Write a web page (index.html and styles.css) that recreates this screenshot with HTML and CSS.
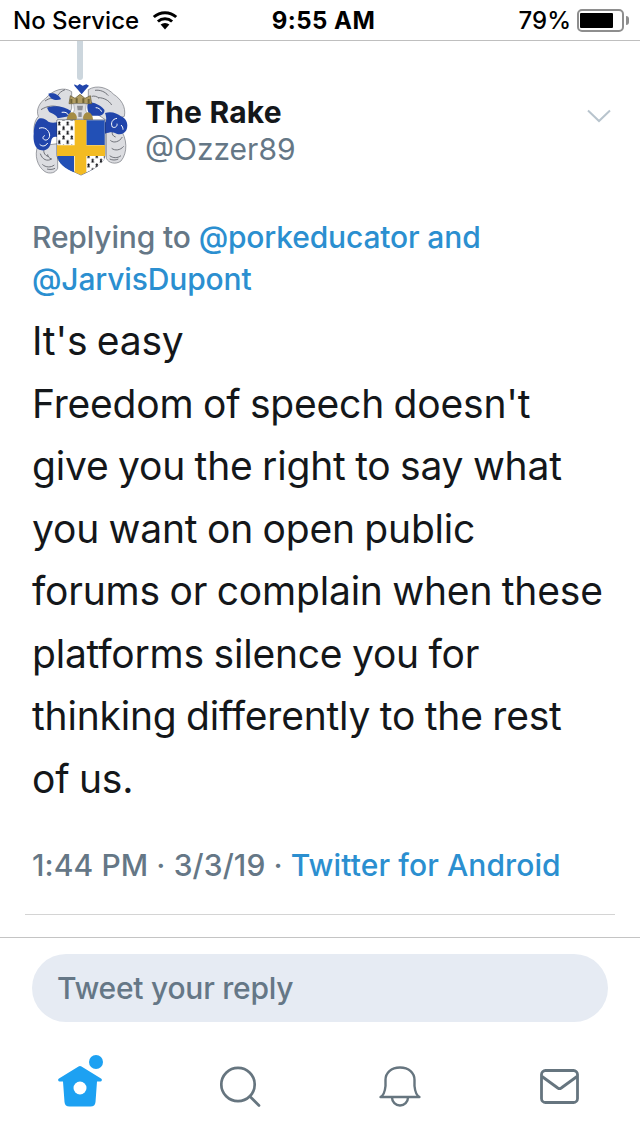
FILE: index.html
```html
<!DOCTYPE html>
<html lang="en">
<head>
<meta charset="utf-8">
<title>Tweet</title>
<link rel="stylesheet" href="styles.css">
</head>
<body>
<div class="screen">
  <header class="status">
    <div class="status-left">
      <span>No Service</span>
      <svg class="wifi" viewBox="0 0 28 20"><path d="M14 19.500 9.600 14.600a6.600 6.600 0 0 1 8.800 0Z" fill="#000"/><path d="M6.900 11.500a10.600 10.600 0 0 1 14.200 0M2.800 7a16.600 16.600 0 0 1 22.400 0" fill="none" stroke="#000" stroke-width="3"/></svg>
    </div>
    <div class="status-time">9:55 AM</div>
    <div class="status-right">
      <span>79%</span>
      <div class="battery"><div class="battery-level"></div></div>
      <div class="battery-cap"></div>
    </div>
  </header>
  <main class="tweet">
    <div class="thread-line"></div>
    <div class="author">
      <svg class="avatar" viewBox="21 24 288 294">
        <defs>
          <pattern id="ermine" x="97" y="138" width="25" height="28" patternUnits="userSpaceOnUse">
            <rect width="25" height="28" fill="#fff"/>
            <path d="M6 1 10 4 8 7 10.500 12.500H1.500L4 7 2 4ZM18.500 15 22.500 18 20.500 21 23 26.500H14L16.500 21 14.500 18Z" fill="#101116"/>
          </pattern>
        </defs>
        <g fill="#dcdde1" stroke="#6f727a" stroke-width="2">
          <path d="M140 50C118 34 84 44 62 70 44 82 32 104 40 124 26 140 22 170 34 190L110 170 140 100Z"/>
          <path d="M190 44C216 28 248 38 266 58 288 72 304 96 298 124L250 140 190 100Z"/>
          <path d="M38 214C28 240 36 274 60 290 74 298 92 294 98 280V206Z"/>
          <path d="M284 160C308 190 308 234 288 258 272 270 250 264 244 250V160Z"/>
        </g>
        <g fill="none" stroke="#55585f" stroke-width="2.400">
          <path d="M46 236c6 18 20 24 34 16-8-2-12-8-12-14M60 218c-8 10-2 24 10 26M52 268c10 10 26 10 36 2M66 282c8 2 16 2 24-2"/>
          <path d="M292 186c-8 14-26 20-36 10M296 214c-10 12-26 14-36 6M288 242c-10 8-24 8-34 0M262 168c-2 10 2 16 10 18M254 252c8 4 18 4 26 0"/>
          <path d="M60 78c14-10 30-12 46-6M48 104c18-12 40-14 58-6M120 44c-10 4-18 10-22 18M210 46c16-2 30 4 40 16M220 68c16 0 32 8 40 22M200 64c8-2 16 0 22 6"/>
        </g>
        <g fill="#2145ab">
          <path d="M70 56c14-4 30 0 38 16-12 6-32 4-38-16Z"/>
          <path d="M66 98c20-8 52-6 72 10l-6 16-34 6c-4-10-16-14-24-18-4-4-6-10-8-14Z"/>
          <path d="M44 130c10-2 18 2 26 10 8 4 16 4 26 2v44c-12-2-16 4-18 14-2 16-12 28-28 26-22-2-26-30-24-50 0-18 6-40 18-46Z"/>
          <path d="M190 82c18 0 36 8 48 22 2 10-6 16-14 18h-30c-6-12-10-28-4-40Z"/>
          <path d="M240 114c18-6 36 0 48 10 20 8 22 28 16 42-8 14-24 14-34 8-8-4-18-2-30 2l-2-32c6-4 8-14 2-30Z"/>
          <path d="M148 28l9 4 7-5 9 5 11-4 8 4-12 14-10 12-10-12-12-14Z"/>
        </g>
        <g fill="none" stroke="#fff" stroke-width="3">
          <path d="M42 160c16-6 30 4 32 20 0 12-10 18-16 14-8-4-3-12 2-12M44 208c8 8 18 6 24-4"/>
          <path d="M276 130c-14 2-20 14-14 26 8 4 16-2 14-10M110 112c10-2 18 2 20 8M212 98c8 0 14 4 18 12M288 150c4 4 6 8 6 14"/>
        </g>
        <path d="M132 86 136 62 150 70 165 58 180 70 196 62 200 86Z" fill="#b09c62" stroke="#5f5530" stroke-width="2"/>
        <path d="M136 72h6v12h-6ZM152 70h6v14h-6ZM172 70h6v14h-6ZM188 72h6v12h-6Z" fill="#6f6336"/>
        <path d="M146 86h38l-2 18 8 28h-50l8-28Z" fill="#dcdde0" stroke="#7b7d84" stroke-width="1.500"/>
        <path d="M156 92h18l-2 14h-14ZM160 112h10v14h-10Z" fill="#8c8e94"/>
        <path d="M126 134c0-16 12-28 22-20 6 4 10 14 6 20ZM204 134c0-16-12-28-22-20-6 4-10 14-6 20Z" fill="#a58c44"/>
        <path d="M96 135H240V238C240 268 198 286 168 300 138 286 96 268 96 238Z" fill="#fff" stroke="#1f2a4a" stroke-width="2"/>
        <path d="M97 136H147V210H97Z" fill="url(#ermine)"/>
        <path d="M184 136H239V210H184Z" fill="#2250b6"/>
        <path d="M97 243H147V292C124 282 97 268 97 238Z" fill="#2250b6"/>
        <path d="M184 243H239C239 266 210 280 184 292Z" fill="url(#ermine)"/>
        <path d="M149 135H184V211H240V243H184V292L168 300 149 292V243H96V211H149Z" fill="#f3bb22"/>
      </svg>
      <div class="author-names">
        <div class="author-name">The Rake</div>
        <div class="author-handle">@Ozzer89</div>
      </div>
      <svg class="chevron" viewBox="0 0 24 14"><path d="M1 1.500l11 10.500L23 1.500" fill="none" stroke="#b8c4cd" stroke-width="2"/></svg>
    </div>
    <p class="replying">Replying to <a>@porkeducator and</a><br><a>@JarvisDupont</a></p>
    <p class="body">It's easy<br>Freedom of speech doesn't<br>give you the right to say what<br>you want on open public<br>forums or complain when these<br>platforms silence you for<br>thinking differently to the rest<br>of us.</p>
    <p class="meta">1:44 PM · 3/3/19 · <a>Twitter for Android</a></p>
    <div class="rule"></div>
  </main>
  <section class="reply-bar">
    <div class="reply-input">Tweet your reply</div>
  </section>
  <nav class="tabs">
    <div class="tab">
      <svg viewBox="0 0 60 60"><path d="M28.500 7.500a3 3 0 0 1 3 0L51 19.500a1.600 1.600 0 0 1-1 3H47l-1.500 20.500a5 5 0 0 1-5 4.500h-21a5 5 0 0 1-5-4.500L13 22.500h-3a1.600 1.600 0 0 1-1-3Z" fill="#1da1f2"/><circle cx="30" cy="29" r="6.500" fill="#fff"/><circle cx="46" cy="3" r="7" fill="#1da1f2"/></svg>
    </div>
    <div class="tab">
      <svg viewBox="0 0 60 60"><circle cx="28" cy="25.500" r="16.700" fill="none" stroke="#66757f" stroke-width="2.700"/><path d="M40 37.500l9 9" stroke="#66757f" stroke-width="2.700" stroke-linecap="round"/></svg>
    </div>
    <div class="tab">
      <svg viewBox="0 0 60 60"><path d="M10.500 38c3-1.500 4.500-6 5-11v-6C15.500 14 21 8.500 30 8.500S44.500 14 44.500 21v6c.5 5 2 9.500 5 11Z" fill="none" stroke="#66757f" stroke-width="2.400" stroke-linejoin="round"/><path d="M22 38.500a8 8 0 0 0 16 0" fill="none" stroke="#66757f" stroke-width="2.400"/></svg>
    </div>
    <div class="tab">
      <svg viewBox="0 0 60 60"><rect x="11.500" y="11.500" width="36" height="32" rx="4" fill="none" stroke="#66757f" stroke-width="2.800"/><path d="M12 17.500 27.800 29a3 3 0 0 0 3.400 0L47 17.500" fill="none" stroke="#66757f" stroke-width="2.800"/></svg>
    </div>
  </nav>
</div>
</body>
</html>
```
FILE: styles.css
```css
* { box-sizing: border-box; }
html, body { margin: 0; padding: 0; background: #fff; }
body { font-family: Inter, "Liberation Sans", sans-serif; color: #14171a; }
p { margin: 0; }
.screen { width: 640px; height: 1136px; display: flex; flex-direction: column; overflow: hidden; }

.status { height: 41px; flex: none; display: grid; grid-template-columns: 1fr auto 1fr; align-items: center; padding: 0 11px 0 13px; border-bottom: 1px solid #bfbfbf; font-size: 24px; color: #000; }
.status-left { display: flex; align-items: center; gap: 12px; font-weight: 500; }
.wifi { width: 28px; height: 20px; }
.status-time { font-weight: 700; letter-spacing: .5px; margin-left: 5px; }
.status-right { display: flex; align-items: center; justify-content: flex-end; font-weight: 500; }
.battery { width: 47px; height: 23px; margin-left: 6px; border: 2px solid #8e8e8e; border-radius: 5px; padding: 2px 1px; }
.battery-level { width: 33px; height: 15px; background: #000; border-radius: 1px; }
.battery-cap { width: 3px; height: 9px; margin-left: 2px; background: #8e8e8e; border-radius: 0 3px 3px 0; }

.tweet { flex: 1; padding: 0 25px; }
.thread-line { width: 6px; height: 39px; margin-left: 52px; background: #ccd6dd; border-radius: 0 0 3px 3px; }
.author { display: flex; align-items: flex-start; margin: 3px 0 0 7px; }
.avatar { width: 96px; height: 98px; flex: none; }
.author-names { margin-left: 17px; padding-top: 11px; flex: 1; }
.author-name { font-size: 30px; line-height: 37px; font-weight: 700; letter-spacing: .2px; }
.author-handle { font-size: 30px; line-height: 36px; color: #657786; }
.chevron { width: 24px; height: 14px; margin: 26px 4px 0 0; }

.replying { margin: 35px 0 0 7px; font-size: 30px; line-height: 42px; font-weight: 500; letter-spacing: -.15px; color: #657786; }
.replying a, .meta a { color: #2b8fd0; }
.body { margin: 10px 0 0 7px; font-size: 39px; line-height: 62.5px; letter-spacing: -.2px; word-spacing: -1.2px; color: #14171a; white-space: nowrap; }
.meta { margin: 34px 0 0 7px; font-size: 30px; line-height: 42px; font-weight: 500; letter-spacing: .1px; color: #657786; }
.rule { height: 1px; background: #d4d4d4; margin-top: 28px; width: 590px; }

.reply-bar { flex: none; border-top: 1px solid #c4c4c4; padding: 16px 32px 0; height: 109px; }
.reply-input { height: 68px; border-radius: 34px; background: #e6ebf3; padding: 0 25px; display: flex; align-items: center; font-size: 30px; font-weight: 500; letter-spacing: -.25px; color: #657786; }

.tabs { flex: none; height: 90px; display: grid; grid-template-columns: repeat(4, 1fr); }
.tab { display: flex; justify-content: center; padding-top: 13px; }
.tab svg { width: 60px; height: 60px; overflow: visible; }
```
